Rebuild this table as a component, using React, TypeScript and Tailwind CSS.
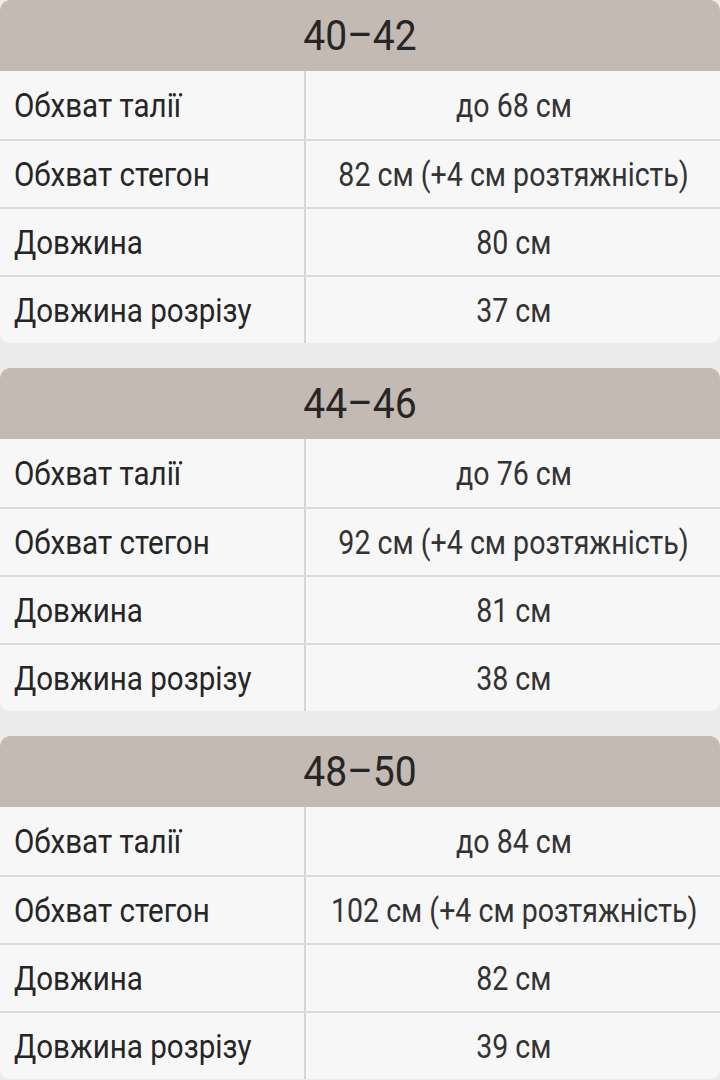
import React from "react"

const tables = [
  {
    size: "40–42",
    rows: [
      ["Обхват талії", "до 68 см"],
      ["Обхват стегон", "82 см (+4 см розтяжність)"],
      ["Довжина", "80 см"],
      ["Довжина розрізу", "37 см"],
    ],
  },
  {
    size: "44–46",
    rows: [
      ["Обхват талії", "до 76 см"],
      ["Обхват стегон", "92 см (+4 см розтяжність)"],
      ["Довжина", "81 см"],
      ["Довжина розрізу", "38 см"],
    ],
  },
  {
    size: "48–50",
    rows: [
      ["Обхват талії", "до 84 см"],
      ["Обхват стегон", "102 см (+4 см розтяжність)"],
      ["Довжина", "82 см"],
      ["Довжина розрізу", "39 см"],
    ],
  },
]

export default function App() {
  return (
    <div
      className="w-[720px] h-[1080px] overflow-hidden bg-[#ebebeb] flex flex-col gap-[25px] text-[#262626]"
      style={{ fontFamily: "Roboto, 'Noto Sans', sans-serif" }}
    >
      {tables.map((t) => (
        <div key={t.size} className="rounded-[10px] overflow-hidden bg-[#f7f7f7] shrink-0">
          <div className="h-[71px] bg-[#c3bab3] flex items-center justify-center text-[42px] leading-none">
            <span className="inline-block scale-x-[0.93]">{t.size}</span>
          </div>
          {t.rows.map(([label, value], i) => (
            <div
              key={label}
              className={`grid grid-cols-[306px_minmax(0,1fr)] h-[68px] ${i > 0 ? "border-t-2 border-[#dcdcdc]" : ""}`}
            >
              <div className="border-r-2 border-[#d6d6d6] flex items-center pl-[14px] text-[34px] leading-none">
                <span className="inline-block whitespace-nowrap origin-left scale-x-[0.87]">{label}</span>
              </div>
              <div className="min-w-0 flex items-center justify-center pl-[2px] text-[34px] leading-none text-[#333333]">
                <span className="inline-block shrink-0 whitespace-nowrap scale-x-[0.84]">{value}</span>
              </div>
            </div>
          ))}
        </div>
      ))}
    </div>
  )
}
